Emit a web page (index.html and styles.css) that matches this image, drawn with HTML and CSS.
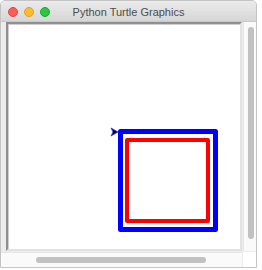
FILE: index.html
```html
<!DOCTYPE html>
<html>
<head>
<meta charset="utf-8">
<link rel="stylesheet" href="styles.css">
</head>
<body>
<div class="window">
  <div class="titlebar">
    <div class="lights">
      <span class="light red"></span>
      <span class="light yellow"></span>
      <span class="light green"></span>
    </div>
    <div class="title">Python Turtle Graphics</div>
  </div>
  <div class="body">
    <div class="canvas">
      <svg class="drawing" width="232" height="225" viewBox="8 24 232 225" xmlns="http://www.w3.org/2000/svg">
        <rect x="120.5" y="131.5" width="95" height="98" fill="none" stroke="#0000ff" stroke-width="5" stroke-linejoin="round"/>
        <rect x="127" y="140" width="81" height="81" fill="none" stroke="#ff0000" stroke-width="4" stroke-linejoin="round"/>
        <polygon points="118,132 111,128 113,132 111,136" fill="#000000" stroke="#3333ff" stroke-width="0.8" stroke-linejoin="round"/>
      </svg>
    </div>
    <div class="vscroll"><div class="vthumb"></div></div>
    <div class="hscroll"><div class="hthumb"></div></div>
    <div class="corner"></div>
  </div>
</div>
</body>
</html>
```
FILE: styles.css
```css
html, body {
  margin: 0;
  padding: 0;
  background: #ffffff;
}
.window {
  width: 255px;
  height: 266px;
  border: 1px solid #c4c4c4;
  border-radius: 5px 5px 0 0;
  background: #ececec;
  display: flex;
  flex-direction: column;
  overflow: hidden;
}
.titlebar {
  height: 20px;
  flex: none;
  border-bottom: 1px solid #c9c9c9;
  background: linear-gradient(#ebebeb, #d6d6d6);
  display: flex;
  align-items: center;
  position: relative;
}
.lights {
  display: flex;
  gap: 6px;
  padding-left: 7px;
  padding-top: 2px;
}
.light {
  width: 10px;
  height: 10px;
  border-radius: 50%;
  box-sizing: border-box;
}
.red { background: #fc5f57; border: 0.5px solid #e2463f; }
.yellow { background: #fdbc2e; border: 0.5px solid #e1a116; }
.green { background: #28c840; border: 0.5px solid #14ae2b; }
.title {
  position: absolute;
  left: 0;
  right: 0;
  top: 4px;
  text-align: center;
  font-family: "Liberation Sans", Arial, sans-serif;
  font-size: 11px;
  line-height: 14px;
  color: #4d4d4d;
}
.body {
  flex: 1;
  display: grid;
  grid-template-columns: 236px 13px;
  grid-template-rows: 229px 15px;
  column-gap: 1px;
  row-gap: 1px;
  padding-left: 5px;
}
.canvas {
  box-sizing: border-box;
  border: 2px solid;
  border-color: #8f8f8f #e2e2e2 #e2e2e2 #8f8f8f;
  box-shadow: inset 1px 1px 0 #cfcfcf;
  background: #ffffff;
  overflow: hidden;
}
.drawing {
  display: block;
}
.vscroll {
  background: #fafafa;
  border-left: 1px solid #e6e6e6;
  box-sizing: border-box;
  padding: 5px 0 12px 4px;
}
.vthumb {
  width: 6px;
  height: 100%;
  border-radius: 3px;
  background: #c1c1c1;
}
.hscroll {
  background: #fafafa;
  border-top: 1px solid #e6e6e6;
  margin-left: -5px;
  box-sizing: border-box;
  padding: 4px 0 0 35px;
}
.hthumb {
  width: 170px;
  height: 6px;
  border-radius: 3px;
  background: #c1c1c1;
}
.corner {
  background: #ffffff;
}
```
